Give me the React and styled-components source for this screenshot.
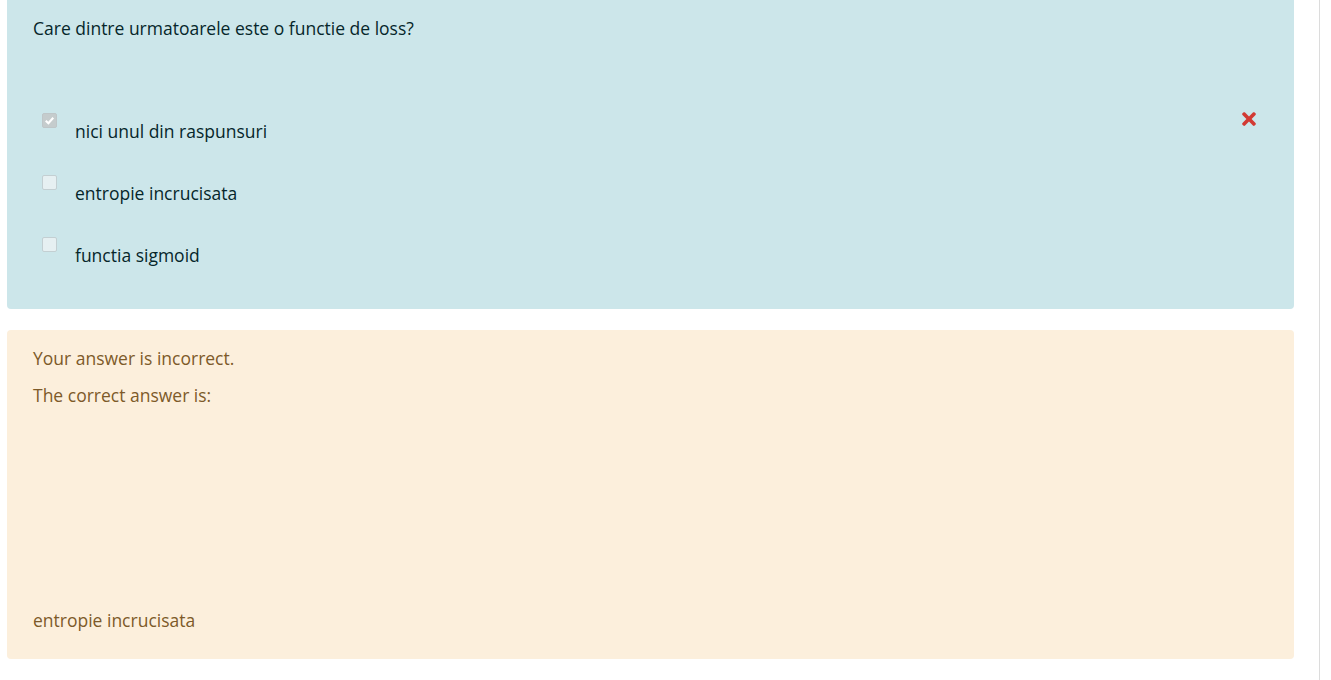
import React from 'react';
import styled, { createGlobalStyle } from 'styled-components';
import { FaTimes } from 'react-icons/fa';

const GlobalStyle = createGlobalStyle`
  html, body {
    margin: 0;
    padding: 0;
    background: #ffffff;
  }
  body {
    font-family: 'Open Sans', 'Noto Sans', sans-serif;
    font-size: 17.5px;
    line-height: 22.5px;
  }
`;

const Page = styled.div`
  width: 1320px;
  min-height: 680px;
  border-right: 1px solid #dcdcdc;
  box-sizing: border-box;
  padding: 0 25px 0 7px;
`;

const Formulation = styled.div`
  background: #cce6ea;
  color: #06262b;
  border-radius: 0 0 4px 4px;
  padding: 17px 0 18px 26px;
`;

const QuestionText = styled.div`
  margin-bottom: 65px;
`;

const AnswerRow = styled.div`
  display: flex;
  align-items: flex-start;
  height: 62px;
`;

const Check = styled.span`
  box-sizing: border-box;
  flex: 0 0 15px;
  width: 15px;
  height: 15px;
  margin: 8px 0 0 9px;
  border-radius: 2px;
  border: 1px solid ${(p) => (p.checked ? '#bfc6c8' : '#c3cfd2')};
  background: ${(p) => (p.checked ? '#c5cccd' : '#e6f0f2')};
  display: flex;
  align-items: center;
  justify-content: center;
`;

const AnswerLabel = styled.span`
  margin: 15px 0 0 18px;
  line-height: 22px;
`;

const WrongIcon = styled.span`
  margin: 4px 35px 0 auto;
  color: #d23a33;
  line-height: 0;
`;

const Outcome = styled.div`
  margin-top: 21px;
  background: #fcefdc;
  color: #7d5a29;
  border-radius: 4px;
  padding: 17px 0 28px 26px;
`;

const Para = styled.p`
  margin: 0 0 ${(p) => p.gap || 0}px;
`;

const answers = [
  { text: 'nici unul din raspunsuri', checked: true, wrong: true },
  { text: 'entropie incrucisata', checked: false },
  { text: 'functia sigmoid', checked: false },
];

const App = () => (
  <>
    <GlobalStyle />
    <Page>
      <Formulation>
        <QuestionText>Care dintre urmatoarele este o functie de loss?</QuestionText>
        {answers.map((a) => (
          <AnswerRow key={a.text}>
            <Check checked={a.checked}>
              {a.checked && (
                <svg width="11" height="11" viewBox="0 0 10 10">
                  <path d="M1.6 5.2 L4 7.5 L8.4 2.5" fill="none" stroke="#ffffff" strokeWidth="1.9" />
                </svg>
              )}
            </Check>
            <AnswerLabel>{a.text}</AnswerLabel>
            {a.wrong && (
              <WrongIcon>
                <FaTimes size={20} />
              </WrongIcon>
            )}
          </AnswerRow>
        ))}
      </Formulation>
      <Outcome>
        <Para gap={15}>Your answer is incorrect.</Para>
        <Para gap={202}>The correct answer is:</Para>
        <Para>entropie incrucisata</Para>
      </Outcome>
    </Page>
  </>
);

export default App;
